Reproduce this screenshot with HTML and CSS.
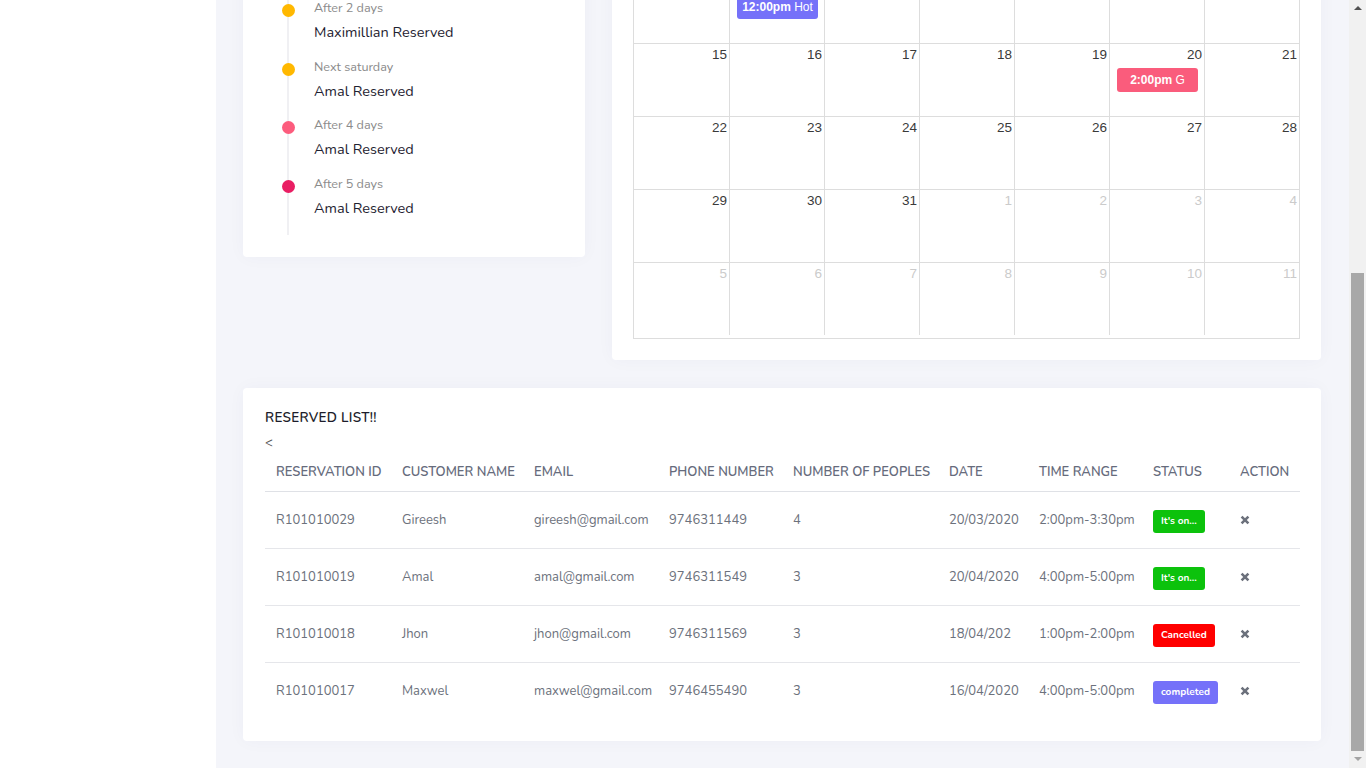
FILE: index.html
```html
<!DOCTYPE html>
<html lang="en">
<head>
<meta charset="utf-8">
<title>Hotel Dashboard</title>
<link rel="stylesheet" href="styles.css">
</head>
<body>
<div class="layout">
  <aside class="sidebar">
    <div class="brand">Hotel Admin</div>
    <nav class="nav">
      <a class="nav-item active">Dashboard</a>
      <a class="nav-item">Reservations</a>
      <a class="nav-item">Rooms</a>
    </nav>
  </aside>
  <main class="main">
    <header class="topbar">
      <span class="topbar-title">Dashboard</span>
    </header>
    <div class="content">
      <div class="page-head">
        <h1 class="page-title">Reservations</h1>
      </div>

      <div class="row-top">
        <section class="card timeline-card">
          <div class="card-head">
            <h4 class="card-title">Upcoming Reservations</h4>
          </div>
          <ul class="timeline">
            <li class="tl-item"><span class="dot dot-pink"></span><div class="tl-label">Tomorrow</div><div class="tl-title">Gireesh Reserved</div></li>
            <li class="tl-item"><span class="dot dot-red"></span><div class="tl-label">Tomorrow</div><div class="tl-title">Jhon Reserved</div></li>
            <li class="tl-item"><span class="dot dot-yellow"></span><div class="tl-label">After 2 days</div><div class="tl-title">Maximillian Reserved</div></li>
            <li class="tl-item"><span class="dot dot-yellow"></span><div class="tl-label">Next saturday</div><div class="tl-title">Amal Reserved</div></li>
            <li class="tl-item"><span class="dot dot-pink"></span><div class="tl-label">After 4 days</div><div class="tl-title">Amal Reserved</div></li>
            <li class="tl-item"><span class="dot dot-red"></span><div class="tl-label">After 5 days</div><div class="tl-title">Amal Reserved</div></li>
          </ul>
        </section>

        <section class="card calendar-card">
          <div class="fc-toolbar">
            <div class="fc-btns"><span class="fc-btn">&lt;</span><span class="fc-btn">&gt;</span><span class="fc-btn">today</span></div>
            <h2 class="fc-title">March 2020</h2>
            <div class="fc-btns"><span class="fc-btn">month</span><span class="fc-btn">week</span><span class="fc-btn">day</span></div>
          </div>
          <div class="fc-grid">
            <div class="fc-head">
              <div class="fc-hcell">Sun</div><div class="fc-hcell">Mon</div><div class="fc-hcell">Tue</div><div class="fc-hcell">Wed</div><div class="fc-hcell">Thu</div><div class="fc-hcell">Fri</div><div class="fc-hcell">Sat</div>
            </div>
            <div class="fc-body">
              <div class="fc-row">
                <div class="fc-cell"><div class="fc-num">1</div></div><div class="fc-cell"><div class="fc-num">2</div></div><div class="fc-cell"><div class="fc-num">3</div></div><div class="fc-cell"><div class="fc-num">4</div></div><div class="fc-cell"><div class="fc-num">5</div></div><div class="fc-cell"><div class="fc-num">6</div></div><div class="fc-cell"><div class="fc-num">7</div></div>
              </div>
              <div class="fc-row">
                <div class="fc-cell"><div class="fc-num">8</div></div>
                <div class="fc-cell"><div class="fc-num">9</div><div class="fc-event ev-purple"><b>12:00pm</b> Hot</div></div>
                <div class="fc-cell"><div class="fc-num">10</div></div><div class="fc-cell"><div class="fc-num">11</div></div><div class="fc-cell"><div class="fc-num">12</div></div><div class="fc-cell"><div class="fc-num">13</div></div><div class="fc-cell"><div class="fc-num">14</div></div>
              </div>
              <div class="fc-row">
                <div class="fc-cell"><div class="fc-num">15</div></div><div class="fc-cell"><div class="fc-num">16</div></div><div class="fc-cell"><div class="fc-num">17</div></div><div class="fc-cell"><div class="fc-num">18</div></div><div class="fc-cell"><div class="fc-num">19</div></div>
                <div class="fc-cell"><div class="fc-num">20</div><div class="fc-event ev-pink"><b>2:00pm</b> G</div></div>
                <div class="fc-cell"><div class="fc-num">21</div></div>
              </div>
              <div class="fc-row">
                <div class="fc-cell"><div class="fc-num">22</div></div><div class="fc-cell"><div class="fc-num">23</div></div><div class="fc-cell"><div class="fc-num">24</div></div><div class="fc-cell"><div class="fc-num">25</div></div><div class="fc-cell"><div class="fc-num">26</div></div><div class="fc-cell"><div class="fc-num">27</div></div><div class="fc-cell"><div class="fc-num">28</div></div>
              </div>
              <div class="fc-row">
                <div class="fc-cell"><div class="fc-num">29</div></div><div class="fc-cell"><div class="fc-num">30</div></div><div class="fc-cell"><div class="fc-num">31</div></div><div class="fc-cell other"><div class="fc-num">1</div></div><div class="fc-cell other"><div class="fc-num">2</div></div><div class="fc-cell other"><div class="fc-num">3</div></div><div class="fc-cell other"><div class="fc-num">4</div></div>
              </div>
              <div class="fc-row">
                <div class="fc-cell other"><div class="fc-num">5</div></div><div class="fc-cell other"><div class="fc-num">6</div></div><div class="fc-cell other"><div class="fc-num">7</div></div><div class="fc-cell other"><div class="fc-num">8</div></div><div class="fc-cell other"><div class="fc-num">9</div></div><div class="fc-cell other"><div class="fc-num">10</div></div><div class="fc-cell other"><div class="fc-num">11</div></div>
              </div>
            </div>
          </div>
        </section>
      </div>

      <section class="card list-card">
        <h4 class="list-title">RESERVED LIST!!</h4>
        <div class="list-prev">&lt;</div>
        <table class="res-table">
          <colgroup>
            <col class="c1"><col class="c2"><col class="c3"><col class="c4"><col class="c5"><col class="c6"><col class="c7"><col class="c8"><col class="c9">
          </colgroup>
          <thead>
            <tr><th>Reservation ID</th><th>Customer Name</th><th>Email</th><th>Phone Number</th><th>Number of Peoples</th><th>Date</th><th>Time Range</th><th>Status</th><th>Action</th></tr>
          </thead>
          <tbody>
            <tr><td>R101010029</td><td>Gireesh</td><td>gireesh@gmail.com</td><td>9746311449</td><td>4</td><td>20/03/2020</td><td>2:00pm-3:30pm</td><td><span class="badge badge-green">It's on...</span></td><td><svg class="x-icon" width="10" height="10" viewBox="0 0 10 10"><path d="M1.6 1.6 L8.4 8.4 M8.4 1.6 L1.6 8.4"/></svg></td></tr>
            <tr><td>R101010019</td><td>Amal</td><td>amal@gmail.com</td><td>9746311549</td><td>3</td><td>20/04/2020</td><td>4:00pm-5:00pm</td><td><span class="badge badge-green">It's on...</span></td><td><svg class="x-icon" width="10" height="10" viewBox="0 0 10 10"><path d="M1.6 1.6 L8.4 8.4 M8.4 1.6 L1.6 8.4"/></svg></td></tr>
            <tr><td>R101010018</td><td>Jhon</td><td>jhon@gmail.com</td><td>9746311569</td><td>3</td><td>18/04/202</td><td>1:00pm-2:00pm</td><td><span class="badge badge-red">Cancelled</span></td><td><svg class="x-icon" width="10" height="10" viewBox="0 0 10 10"><path d="M1.6 1.6 L8.4 8.4 M8.4 1.6 L1.6 8.4"/></svg></td></tr>
            <tr><td>R101010017</td><td>Maxwel</td><td>maxwel@gmail.com</td><td>9746455490</td><td>3</td><td>16/04/2020</td><td>4:00pm-5:00pm</td><td><span class="badge badge-purple">completed</span></td><td><svg class="x-icon" width="10" height="10" viewBox="0 0 10 10"><path d="M1.6 1.6 L8.4 8.4 M8.4 1.6 L1.6 8.4"/></svg></td></tr>
          </tbody>
        </table>
      </section>
    </div>
  </main>
</div>

<div class="scrollbar" aria-hidden="true">
  <span class="sb-arrow sb-up"></span>
  <span class="sb-thumb"></span>
  <span class="sb-arrow sb-down"></span>
</div>

<script src="script.js"></script>
</body>
</html>
```

FILE: styles.css
```css
* { box-sizing: border-box; }
html, body { margin: 0; padding: 0; }
body {
  font-family: "Nunito", "Lato", "Open Sans", sans-serif;
  background: #f4f5fa;
  color: #6c717c;
  padding-right: 17px;
}

.layout {
  display: grid;
  grid-template-columns: 216px 1fr;
  min-height: 100vh;
}

/* sidebar */
.sidebar { background: #fff; }
.brand {
  height: 70px;
  display: flex;
  align-items: center;
  padding: 0 24px;
  font-size: 20px;
  font-weight: 700;
  color: #7571f9;
}
.nav { display: flex; flex-direction: column; padding: 10px 0; }
.nav-item { padding: 12px 24px; font-size: 14px; color: #6c717c; }
.nav-item.active { color: #7571f9; }

/* main */
.main { min-width: 0; }
.topbar {
  height: 70px;
  background: #fff;
  display: flex;
  align-items: center;
  padding: 0 30px;
  font-size: 15px;
  color: #333;
}
.content { padding: 30px 28px 27px 27px; }
.page-head { height: 84px; margin-bottom: 28px; }
.page-title { margin: 0; font-size: 22px; line-height: 32px; color: #222; font-weight: 600; }

.card {
  background: #fff;
  border-radius: 4px;
  box-shadow: 0 0 18px rgba(40, 50, 110, 0.035);
}

.row-top {
  display: grid;
  grid-template-columns: 342px 1fr;
  gap: 27px;
  align-items: start;
  margin-bottom: 28px;
}

/* timeline */
.timeline-card { padding: 22px; }
.card-head { height: 44px; margin-bottom: 25px; }
.card-title { margin: 0; font-size: 16px; line-height: 22px; color: #222; font-weight: 600; }

.timeline {
  list-style: none;
  margin: 0;
  padding: 0 0 1px 49px;
  position: relative;
}
.timeline::before {
  content: "";
  position: absolute;
  left: 22px;
  top: 0;
  bottom: 0;
  width: 2px;
  background: #f0f0f3;
}
.tl-item { position: relative; height: 58.5px; }
.dot {
  position: absolute;
  left: -32px;
  top: 4px;
  width: 13px;
  height: 13px;
  border-radius: 50%;
}
.dot-yellow { background: #ffb800; }
.dot-pink { background: #fc5c7d; }
.dot-red { background: #e91e63; }
.tl-label { font-size: 12.6px; line-height: 16px; color: #8b8b8b; }
.tl-title { margin-top: 6px; font-size: 14.5px; line-height: 20px; color: #1e2230; }

/* calendar */
.calendar-card { padding: 21px; }
.fc-toolbar {
  height: 38px;
  margin-bottom: 20px;
  display: flex;
  align-items: center;
  justify-content: space-between;
  font-family: "Liberation Sans", Arial, sans-serif;
}
.fc-title { margin: 0; font-size: 20px; color: #333; font-weight: 400; }
.fc-btns { display: flex; gap: 2px; }
.fc-btn {
  padding: 6px 12px;
  background: #f0f0f0;
  border: 1px solid #ccc;
  font-size: 13px;
  color: #333;
}
.fc-grid {
  border: 1px solid #ddd;
  font-family: "Liberation Sans", Arial, sans-serif;
}
.fc-head {
  display: grid;
  grid-template-columns: repeat(7, 1fr);
  border-bottom: 1px solid #ddd;
}
.fc-hcell {
  height: 25px;
  line-height: 25px;
  text-align: center;
  font-size: 13px;
  font-weight: 700;
  color: #333;
  border-left: 1px solid #ddd;
}
.fc-hcell:first-child { border-left: 0; }
.fc-body { padding-bottom: 3px; }
.fc-row {
  display: grid;
  grid-template-columns: repeat(7, 1fr);
  height: 73px;
  border-bottom: 1px solid #ddd;
}
.fc-row:last-child { height: 72px; border-bottom: 0; }
.fc-cell { border-left: 1px solid #ddd; min-width: 0; }
.fc-cell:first-child { border-left: 0; }
.fc-num {
  text-align: right;
  padding: 2px 2px 0 0;
  font-size: 13.5px;
  line-height: 18px;
  color: #3a3a3a;
}
.fc-cell.other .fc-num { color: #cbcbcb; }
.fc-event {
  margin: 4px 6px 0 7px;
  padding: 4px 3px;
  border-radius: 3px;
  font-size: 12px;
  line-height: 16px;
  color: #fff;
  text-align: center;
  white-space: nowrap;
  overflow: hidden;
}
.ev-purple { background: #7571f9; }
.ev-pink { background: #fa5c7c; }

/* reserved list */
.list-card { padding: 20px 21px 22px 22px; }
.list-title {
  margin: 0 0 7px;
  font-size: 13.5px;
  line-height: 20px;
  font-weight: 600;
  letter-spacing: 0.3px;
  color: #1c1d2b;
}
.list-prev { font-size: 13px; line-height: 16px; color: #555; }

.res-table {
  width: 100%;
  table-layout: fixed;
  border-collapse: separate;
  border-spacing: 0;
  font-size: 13px;
}
.c1 { width: 126px; }
.c2 { width: 132px; }
.c3 { width: 135px; }
.c4 { width: 124px; }
.c5 { width: 156px; }
.c6 { width: 90px; }
.c7 { width: 114px; }
.c8 { width: 87px; }
.c9 { width: 71px; }
.res-table th {
  text-align: left;
  text-transform: uppercase;
  font-weight: 600;
  color: #666b7c;
  padding: 13px 11px 11px;
  line-height: 16px;
  border-bottom: 1px solid #dfe1e6;
  white-space: nowrap;
}
.res-table td {
  padding: 20px 11px;
  height: 57px;
  line-height: 16px;
  color: #6c717c;
  white-space: nowrap;
}
.res-table tbody tr:last-child td { height: 56px; }
.res-table tbody tr:not(:last-child) td { border-bottom: 1px solid #e5e6ea; }

.badge {
  display: inline-block;
  height: 23px;
  line-height: 23px;
  margin: -2px 0 -5px;
  padding: 0 8px;
  border-radius: 3px;
  font-size: 10px;
  font-weight: 700;
  color: #fff;
  vertical-align: top;
}
.badge-green { background: #0cc20c; }
.badge-red { background: #ff0000; }
.badge-purple { background: #7571f9; }

.x-icon { display: inline-block; vertical-align: top; margin-top: 3px; }
.x-icon path { stroke: #6c717c; stroke-width: 2.6; fill: none; }

/* emulated classic window scrollbar (overlay) */
.scrollbar {
  position: fixed;
  top: 0;
  right: 0;
  width: 17px;
  height: 100vh;
  background: #f1f1f1;
}
.sb-thumb {
  position: absolute;
  left: 2px;
  top: 273px;
  width: 13px;
  height: 478px;
  background: #a8a8a8;
}
.sb-arrow {
  position: absolute;
  left: 5px;
  width: 0;
  height: 0;
  border-left: 4px solid transparent;
  border-right: 4px solid transparent;
}
.sb-up { top: 6px; border-bottom: 4px solid #505050; }
.sb-down { bottom: 7px; border-top: 4px solid #a3a3a3; }
```

FILE: script.js
```js
function scrollToBottom() {
  window.scrollTo(0, document.documentElement.scrollHeight);
}
scrollToBottom();
window.addEventListener('load', scrollToBottom);
```
